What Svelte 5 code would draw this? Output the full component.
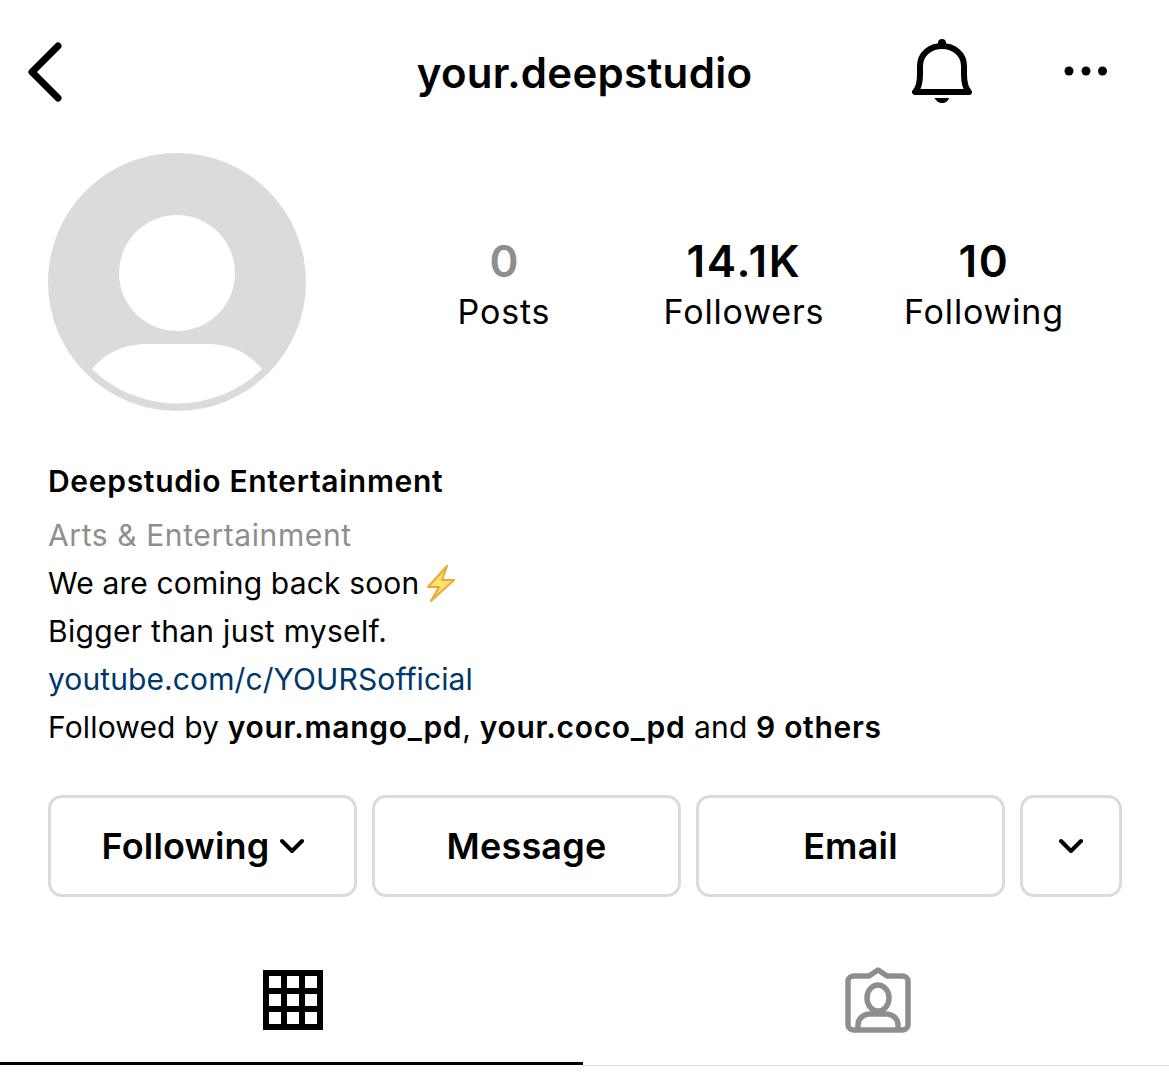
<script>
    const stats = [
        { value: '0', label: 'Posts', muted: true },
        { value: '14.1K', label: 'Followers' },
        { value: '10', label: 'Following' }
    ];
</script>

<div class="page">
    <header class="topbar">
        <button class="back" aria-label="back">
            <svg width="40" height="64" viewBox="0 0 40 64" fill="none" stroke="#000" stroke-width="7" stroke-linecap="round" stroke-linejoin="round">
                <path d="M32 6 L6 32 L32 58" />
            </svg>
        </button>
        <h1>your.deepstudio</h1>
        <div class="actions">
            <svg class="bell" width="60" height="68" viewBox="0 0 60 68" fill="none" stroke="#000" stroke-width="6" stroke-linecap="round" stroke-linejoin="round">
                <path d="M3 54 H57 C53 50 52 44 52 36 V28 C52 16 42 8 30 8 C18 8 8 16 8 28 V36 C8 44 7 50 3 54 Z" />
                <circle cx="30" cy="5" r="4" fill="#000" stroke="none" />
                <path d="M23.500 60.500 H36.500 C35 66 25 66 23.500 60.500 Z" fill="#000" stroke-width="1" />
            </svg>
            <svg class="dots" width="44" height="10" viewBox="0 0 44 10" fill="#000">
                <circle cx="5" cy="5" r="4.5" />
                <circle cx="22" cy="5" r="4.5" />
                <circle cx="38.500" cy="5" r="4.5" />
            </svg>
        </div>
    </header>

    <section class="profile">
        <svg class="avatar" width="258" height="258" viewBox="0 0 258 258">
            <circle cx="129" cy="129" r="129" fill="#dbdbdb" />
            <circle cx="129" cy="120" r="58" fill="#fff" />
            <path d="M44 216 C58 200 74 191 100 191 H158 C184 191 200 200 214 216 A122 122 0 0 1 44 216 Z" fill="#fff" />
        </svg>
        <div class="stats">
            {#each stats as stat}
                <div class="stat">
                    <strong class:muted={stat.muted}>{stat.value}</strong>
                    <span>{stat.label}</span>
                </div>
            {/each}
        </div>
    </section>

    <section class="bio">
        <div class="name">Deepstudio Entertainment</div>
        <div class="category">Arts &amp; Entertainment</div>
        <div class="line">We are coming back soon
            <svg class="bolt" width="30" height="38" viewBox="0 0 30 38">
                <path d="M21 1 L2 22 H13 L5 36 L28 15 H16 Z" fill="#fde272" stroke="#eda830" stroke-width="2" stroke-linejoin="round" />
            </svg>
        </div>
        <div class="line wide">Bigger than just myself.</div>
        <div class="link">youtube.com/c/YOURSofficial</div>
        <div class="line">Followed by <b>your.mango_pd</b>, <b>your.coco_pd</b> and <b>9 others</b></div>
    </section>

    <div class="buttons">
        <button>Following
            <svg width="24" height="16" viewBox="0 0 24 16" fill="none" stroke="#000" stroke-width="4" stroke-linecap="round" stroke-linejoin="round">
                <path d="M2 3 L12 13 L22 3" />
            </svg>
        </button>
        <button>Message</button>
        <button>Email</button>
        <button aria-label="more">
            <svg width="24" height="16" viewBox="0 0 24 16" fill="none" stroke="#000" stroke-width="4" stroke-linecap="round" stroke-linejoin="round">
                <path d="M2 3 L12 13 L22 3" />
            </svg>
        </button>
    </div>

    <nav class="tabs">
        <div class="tab active">
            <svg width="60" height="60" viewBox="0 0 60 60" fill="none" stroke="#000" stroke-width="6">
                <path d="M3 3 H57 V57 H3 Z M21 3 V57 M39 3 V57 M3 21 H57 M3 39 H57" />
            </svg>
        </div>
        <div class="tab">
            <svg width="66" height="66" viewBox="0 0 66 66" fill="none" stroke="#8e8e8e" stroke-width="5.500" stroke-linejoin="round">
                <path d="M9 9 H24 L33 3 L42 9 H57 C60 9 63 11 63 14 V58 C63 61 60 63 57 63 H9 C6 63 3 61 3 58 V14 C3 11 6 9 9 9 Z" />
                <ellipse cx="33" cy="31" rx="11" ry="13" />
                <path d="M13 62 V58 C13 51 19 47 25 47 H41 C47 47 53 51 53 58 V62" />
            </svg>
        </div>
    </nav>
</div>

<style>
    :global(body) {
        background: #fff;
    }

    .page {
        width: 1169px;
        height: 1087px;
        overflow: hidden;
        color: #000;
        font-family: Inter, "Liberation Sans", sans-serif;
    }

    .topbar {
        display: grid;
        grid-template-columns: 1fr auto 1fr;
        align-items: center;
        height: 144px;
        padding: 0 26px;
        box-sizing: border-box;
    }

    .back {
        display: flex;
        padding: 0;
        border: none;
        background: none;
    }

    h1 {
        margin: 0;
        font-size: 42px;
        font-weight: 600;
        letter-spacing: 0.3px;
    }

    .actions {
        display: flex;
        align-items: center;
        justify-content: flex-end;
        gap: 92px;
        padding-right: 35px;
    }

    .dots {
        margin-bottom: 3px;
    }

    .profile {
        display: flex;
        margin-top: 9px;
        padding-left: 48px;
    }

    .stats {
        display: flex;
        margin-left: 78px;
        padding-top: 82px;
    }

    .stat {
        display: flex;
        flex-direction: column;
        align-items: center;
        width: 240px;
    }

    .stat strong {
        font-size: 44px;
        font-weight: 600;
        line-height: 52px;
        letter-spacing: 1.8px;
    }

    .stat strong.muted {
        color: #8e8e8e;
        letter-spacing: 0;
    }

    .stat span {
        font-size: 34px;
        line-height: 50px;
        letter-spacing: 0.85px;
    }

    .bio {
        margin-top: 46px;
        padding-left: 48px;
        font-size: 30px;
        line-height: 48px;
        letter-spacing: 0.15px;
    }

    .name {
        margin-bottom: 6px;
        font-weight: 600;
        letter-spacing: 0.7px;
    }

    .category {
        color: #8e8e8e;
        letter-spacing: 0.6px;
    }

    .line.wide {
        letter-spacing: 0.3px;
    }

    .line b {
        font-weight: 600;
        letter-spacing: 0.7px;
    }

    .link {
        color: #00376b;
        letter-spacing: 0.1px;
    }

    .bolt {
        vertical-align: middle;
        margin-left: -2px;
        margin-bottom: 4px;
    }

    .buttons {
        display: grid;
        grid-template-columns: 309px 309px 309px 102px;
        gap: 15px;
        margin-top: 44px;
        padding-left: 48px;
    }

    .buttons button {
        display: flex;
        align-items: center;
        justify-content: center;
        gap: 10px;
        height: 102px;
        padding: 0;
        border: 3px solid #dbdbdb;
        border-radius: 14px;
        background: #fff;
        color: #000;
        font-family: inherit;
        font-size: 36px;
        font-weight: 600;
        letter-spacing: 0.2px;
    }

    .tabs {
        display: flex;
        margin-top: 67px;
    }

    .tab {
        display: flex;
        justify-content: center;
        flex: 1;
        height: 102px;
        box-sizing: border-box;
        padding-top: 3px;
        padding-left: 4px;
        border-bottom: 1px solid #dbdbdb;
    }

    .tab.active {
        flex: 0 0 583px;
        height: 101px;
        padding-top: 6px;
        padding-left: 3px;
        border-bottom: 3px solid #000;
    }
</style>
